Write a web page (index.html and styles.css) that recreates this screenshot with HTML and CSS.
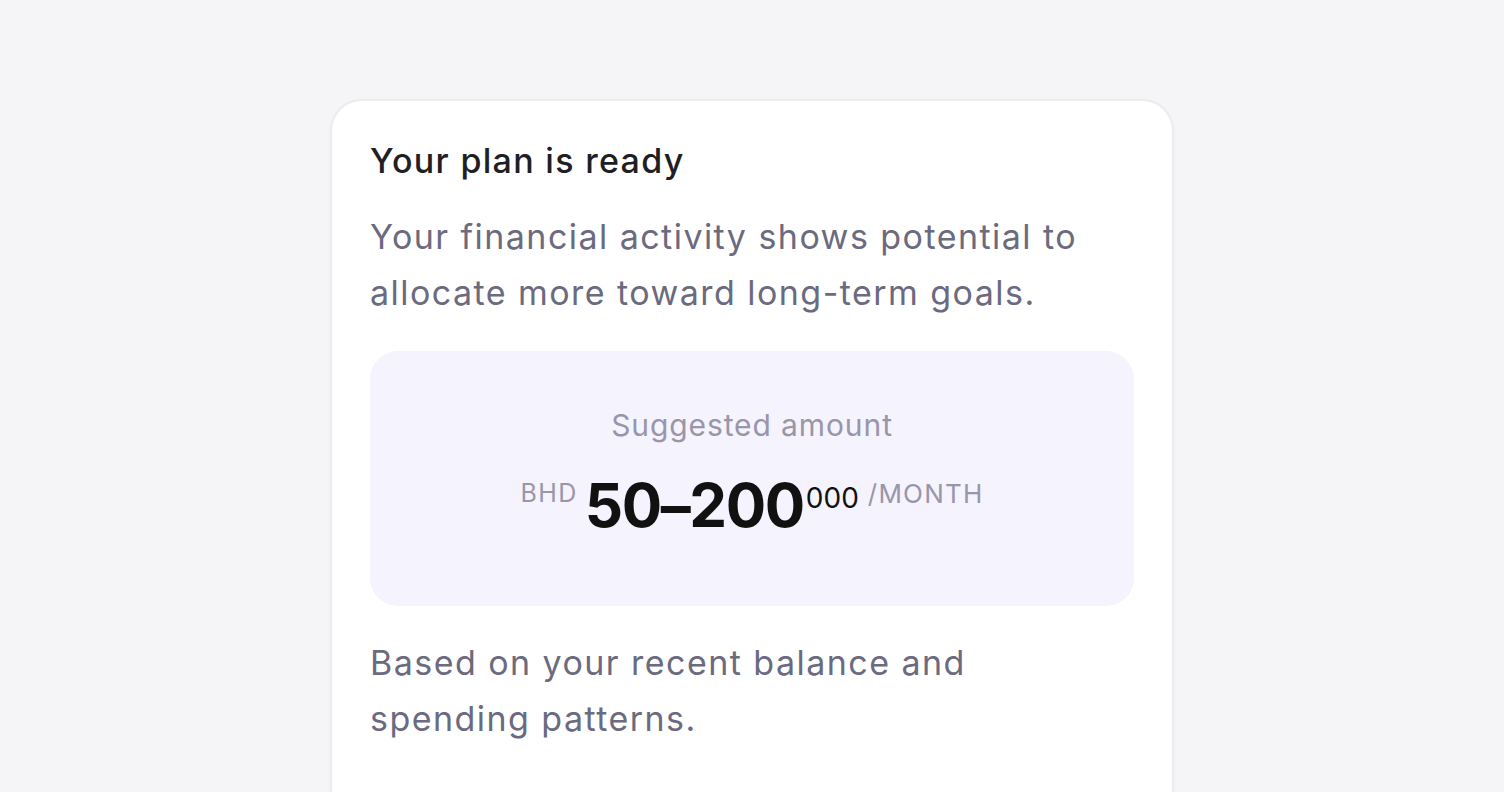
FILE: index.html
```html
<!DOCTYPE html>
<html>
<head>
<meta charset="utf-8">
<link rel="stylesheet" href="styles.css">
</head>
<body>
<div class="page">
  <div class="card">
    <h1 class="title">Your plan is ready</h1>
    <p class="lead">Your financial activity shows potential to allocate more toward long-term goals.</p>
    <div class="amount-box">
      <div class="amount-label">Suggested amount</div>
      <div class="amount-row">
        <span class="cur">BHD</span>
        <span class="num">50–200</span>
        <span class="dec">000</span>
        <span class="per">/MONTH</span>
      </div>
    </div>
    <p class="note">Based on your recent balance and spending patterns.</p>
  </div>
</div>
</body>
</html>
```
FILE: styles.css
```css
html, body {
  margin: 0;
  padding: 0;
  background: #f5f5f7;
  height: 100%;
  overflow: hidden;
}
body {
  font-family: "Inter", "Noto Sans", sans-serif;
}
.page {
  display: flex;
  justify-content: center;
  padding-top: 99px;
}
.card {
  width: 764px;
  background: #ffffff;
  border: 2px solid #ececef;
  border-radius: 32px;
  padding: 38px 38px 60px;
  box-sizing: content-box;
  height: 800px;
  box-shadow: 0 1px 3px rgba(0,0,0,0.03);
}
.title {
  margin: 0;
  font-size: 34px;
  font-weight: 500;
  letter-spacing: 1.3px;
  line-height: 44px;
  color: #202024;
}
.lead, .note {
  margin: 0;
  font-size: 34px;
  letter-spacing: 1.45px;
  line-height: 56px;
  color: #6b6a7e;
  font-weight: 400;
}
.lead {
  margin-top: 26px;
  width: 740px;
}
.amount-box {
  margin-top: 30px;
  height: 255px;
  background: #f5f3fe;
  border-radius: 28px;
  display: flex;
  flex-direction: column;
  align-items: center;
  padding-top: 50px;
  box-sizing: border-box;
}
.amount-label {
  font-size: 30px;
  letter-spacing: 0.9px;
  line-height: 48px;
  color: #9896a8;
}
.amount-row {
  margin-top: 29px;
  display: flex;
  align-items: flex-start;
  line-height: 1;
}
.cur {
  font-size: 25px;
  letter-spacing: 1.4px;
  color: #9896a8;
  margin-top: 3px;
  margin-right: 7px;
}
.num {
  font-size: 60px;
  font-weight: 700;
  color: #111111;
  letter-spacing: -1.4px;
  margin-top: -3px;
}
.dec {
  font-size: 28px;
  color: #111111;
  margin-top: 6px;
  margin-left: 2px;
}
.per {
  font-size: 26px;
  letter-spacing: 1.2px;
  color: #9896a8;
  margin-top: 3px;
  margin-left: 9px;
}
.note {
  margin-top: 29px;
  width: 620px;
}
```
